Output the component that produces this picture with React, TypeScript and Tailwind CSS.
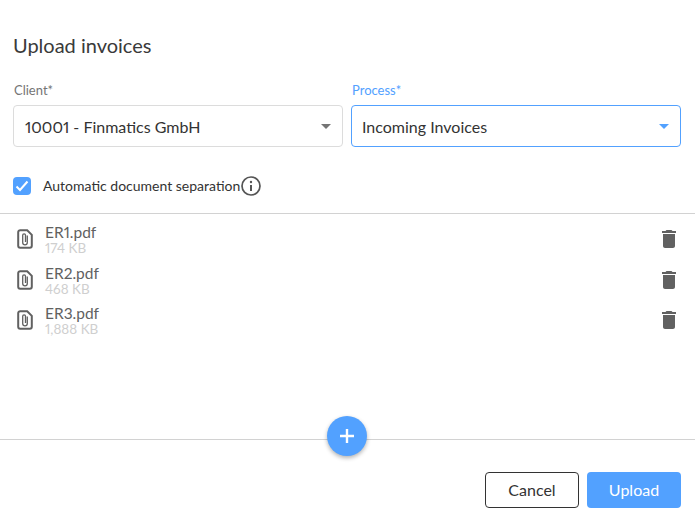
import React from 'react';

const files = [
  { name: 'ER1.pdf', size: '174 KB' },
  { name: 'ER2.pdf', size: '468 KB' },
  { name: 'ER3.pdf', size: '1,888 KB' },
];

const Caret = ({ color }: { color: string }) => (
  <svg width="10" height="5" viewBox="0 0 10 5" className="shrink-0">
    <path d="M0 0h10L5 5z" fill={color} />
  </svg>
);

const FileIcon = () => (
  <svg width="16" height="20" viewBox="0 0 16 20" fill="none" stroke="#616161" className="shrink-0">
    <path d="M1.200 3.200a2 2 0 0 1 2-2h7l4.600 4.600v11a2 2 0 0 1-2 2H3.200a2 2 0 0 1-2-2z" strokeWidth="2" />
    <path d="M10.300 6.500v7a2.300 2.300 0 0 1-4.600 0V6.200a1.400 1.400 0 0 1 2.800 0v6.800" strokeWidth="1.300" />
  </svg>
);

const TrashIcon = () => (
  <svg width="24" height="24" viewBox="0 0 24 24" fill="#616161" className="shrink-0">
    <path d="M6 19c0 1.100.9 2 2 2h8c1.100 0 2-.9 2-2V7H6v12zM19 4h-3.500l-1-1h-5l-1 1H5v2h14V4z" />
  </svg>
);

const InfoIcon = () => (
  <svg width="20" height="20" viewBox="0 0 20 20" fill="none" className="shrink-0">
    <circle cx="10" cy="10" r="9" stroke="#555" strokeWidth="1.700" />
    <circle cx="10" cy="6" r="1.200" fill="#555" />
    <path d="M10 9v6" stroke="#555" strokeWidth="2" />
  </svg>
);

export default function App() {
  return (
    <div className="w-[695px] h-[523px] bg-white overflow-hidden text-[#333] font-['Lato','Liberation_Sans',sans-serif] [font-variant-numeric:proportional-nums]">
      <h1 className="pl-[13px] pt-[32px] text-[20px] leading-[26px] font-normal text-[#3a3a3a]">Upload invoices</h1>

      <div className="flex gap-2 pl-[13px] pr-[14px] mt-[22px]">
        <div className="w-[330px]">
          <div className="pl-px pt-px h-[18px] text-[13px] leading-[18px] text-[#757575]">Client*</div>
          <div className="mt-[7px] h-[42px] flex items-center justify-between pl-[11px] pr-[11px] border border-[#dcdcdc] rounded text-[16px] text-[#333]">
            <span className="pt-px">10001 - Finmatics GmbH</span>
            <Caret color="#757575" />
          </div>
        </div>
        <div className="w-[330px]">
          <div className="pl-px pt-px h-[18px] text-[13px] leading-[18px] text-[#52a1ff]">Process*</div>
          <div className="mt-[7px] h-[42px] flex items-center justify-between pl-[10px] pr-[11px] border border-[#52a1ff] rounded text-[16px] text-[#333]">
            <span className="pt-px">Incoming Invoices</span>
            <Caret color="#52a1ff" />
          </div>
        </div>
      </div>

      <div className="flex items-center pl-[13px] mt-[29px] h-5">
        <div className="w-[18px] h-[18px] rounded-sm bg-[#52a1ff] flex items-center justify-center">
          <svg width="14" height="12" viewBox="0 0 14 12" fill="none">
            <path d="M1.500 6.500l3.500 3.500 7.500-8.500" stroke="#fff" strokeWidth="2" />
          </svg>
        </div>
        <span className="ml-3 text-[14px] leading-[18px] pb-px text-[#333]">Automatic document separation</span>
        <span className="ml-px"><InfoIcon /></span>
      </div>

      <div className="mt-[17px] border-t border-[#d2d2d2]" />

      <div className="h-[225px] pt-[5px] pl-[17px] pr-[14px]">
        {files.map((file) => (
          <div key={file.name} className="flex items-center h-[40.500px]">
            <FileIcon />
            <div className="ml-3 flex-1">
              <div className="pt-px text-[15.500px] leading-[16px] text-[#616161]">{file.name}</div>
              <div className="mt-px text-[13.500px] leading-[14px] text-[#cfcfcf]">{file.size}</div>
            </div>
            <TrashIcon />
          </div>
        ))}
      </div>

      <div className="relative border-t border-[#d2d2d2]">
        <button className="absolute left-[327px] top-[-24px] w-10 h-10 rounded-full bg-[#52a1ff] shadow-[0_2px_4px_rgba(0,0,0,0.3)] flex items-center justify-center">
          <svg width="16" height="16" viewBox="0 0 16 16" fill="none">
            <path d="M8 1v14M1 8h14" stroke="#fff" strokeWidth="2.400" />
          </svg>
        </button>
      </div>

      <div className="flex justify-end gap-2 pr-[14px] mt-[32px]">
        <button className="w-[94px] h-9 rounded border border-[#333] bg-white text-[16px] text-[#333]">Cancel</button>
        <button className="w-[94px] h-9 rounded bg-[#52a1ff] text-[16px] text-white">Upload</button>
      </div>
    </div>
  );
}
